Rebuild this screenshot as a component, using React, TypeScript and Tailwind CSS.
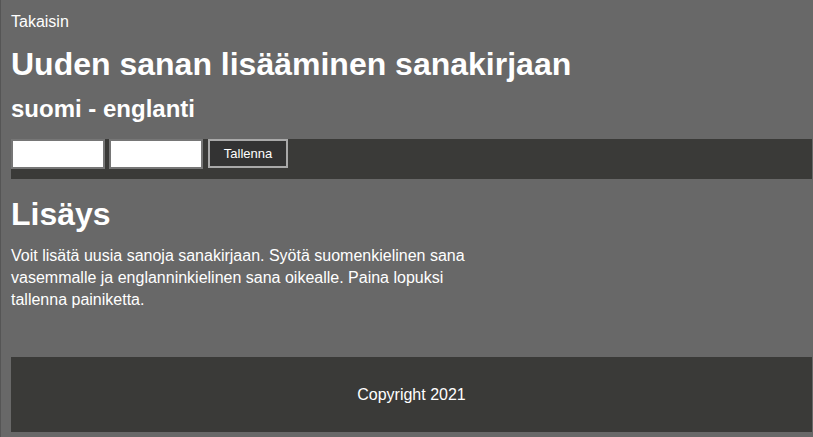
import React from 'react';

const App: React.FC = () => {
  return (
    <div className="min-h-[437px] w-[813px] bg-[#686868] border-l border-[#555555] pl-[10px] pr-[1px] text-white font-['Liberation_Sans',Arial,sans-serif] overflow-hidden">
      <div className="pt-[10px]">
        <a className="text-[16px] leading-[18px] text-white">Takaisin</a>
      </div>

      <h1 className="mt-[12px] text-[32px] leading-[37px] font-bold">Uuden sanan lisääminen sanakirjaan</h1>
      <h2 className="mt-[12px] text-[24px] leading-[28px] font-bold">suomi - englanti</h2>

      <form className="mt-[16px] h-[40px] bg-[#3a3a38] flex items-start" onSubmit={e => e.preventDefault()}>
        <input
          type="text"
          className="w-[94px] h-[30px] bg-white border-2 border-[#767676] text-black px-[2px] outline-none"
        />
        <input
          type="text"
          className="ml-[4px] w-[94px] h-[30px] bg-white border-2 border-[#767676] text-black px-[2px] outline-none"
        />
        <button
          type="submit"
          className="ml-[5px] w-[80px] h-[29px] bg-[#333333] border-2 border-[#a9a9a9] text-white text-[13px]"
        >
          Tallenna
        </button>
      </form>

      <h1 className="mt-[17px] text-[32px] leading-[37px] font-bold">Lisäys</h1>
      <p className="mt-[12px] w-[470px] text-[16px] leading-[22px]">
        Voit lisätä uusia sanoja sanakirjaan. Syötä suomenkielinen sana vasemmalle ja englanninkielinen sana oikealle. Paina lopuksi tallenna painiketta.
      </p>

      <footer className="mt-[46px] h-[75px] bg-[#3a3a38] flex items-center justify-center">
        <p className="text-[16px]">Copyright 2021</p>
      </footer>
    </div>
  );
};

export default App;
